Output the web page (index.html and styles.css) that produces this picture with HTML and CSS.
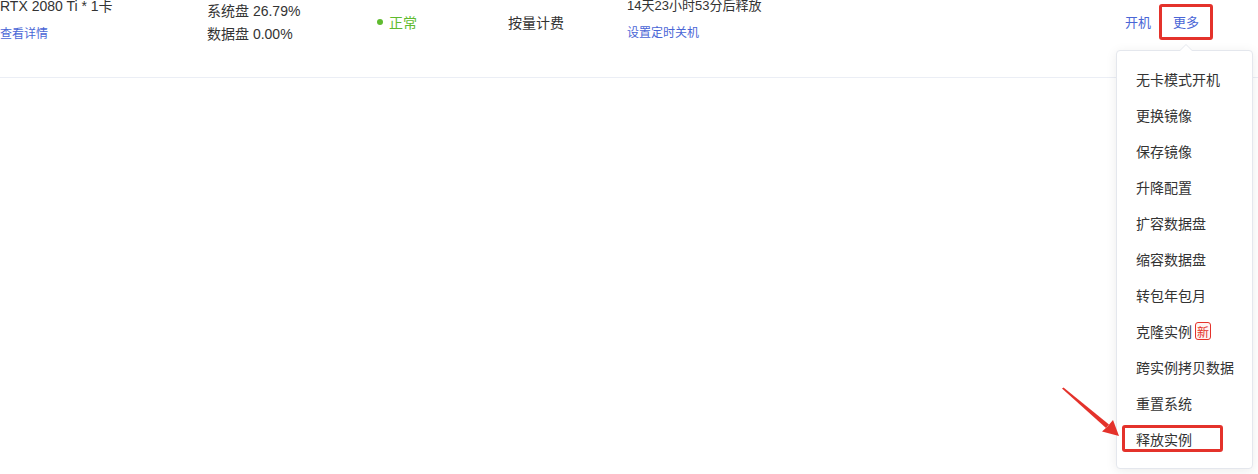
FILE: index.html
```html
<!DOCTYPE html>
<html lang="zh-CN">
<head>
  <meta charset="UTF-8">
  <title>实例列表</title>
  <link rel="stylesheet" href="styles.css">
</head>
<body>
  <div class="page">
    <div class="table">
      <div class="row">
        <div class="cell cell-gpu">
          <div class="line">RTX 2080 Ti * 1卡</div>
          <a class="link link-gpu">查看详情</a>
        </div>
        <div class="cell cell-disk">
          <div class="line">系统盘 26.79%</div>
          <div class="line">数据盘 0.00%</div>
        </div>
        <div class="cell">
          <span class="status"><i class="dot"></i>正常</span>
        </div>
        <div class="cell">按量计费</div>
        <div class="cell cell-release">
          <div class="line">14天23小时53分后释放</div>
          <a class="link link-release">设置定时关机</a>
        </div>
        <div class="cell cell-actions">
          <a class="action">开机</a>
          <a class="action more">更多</a>
        </div>
      </div>
    </div>

    <!-- dropdown opened from 更多 -->
    <div class="dropdown">
      <ul class="menu">
        <li>无卡模式开机</li>
        <li>更换镜像</li>
        <li>保存镜像</li>
        <li>升降配置</li>
        <li>扩容数据盘</li>
        <li>缩容数据盘</li>
        <li>转包年包月</li>
        <li>克隆实例 <span class="badge">新</span></li>
        <li>跨实例拷贝数据</li>
        <li>重置系统</li>
        <li class="marked">释放实例</li>
      </ul>
    </div>

    <svg class="pointer" width="1258" height="474" viewBox="0 0 1258 474">
      <polygon points="1062,388.5 1063.5,387.5 1109,424.5 1106,428" fill="#e4322b"/>
      <polygon points="1119,436 1102,431.5 1107.5,426.5 1113,420 " fill="#e4322b"/>
    </svg>
  </div>
</body>
</html>
```

FILE: styles.css
```css
* {
  margin: 0;
  padding: 0;
  box-sizing: border-box;
}

body {
  font-family: "Liberation Sans", "Noto Sans CJK SC", sans-serif;
  background: #fff;
  color: #333;
  overflow: hidden;
}

.page {
  position: relative;
  width: 1258px;
  height: 474px;
  overflow: hidden;
}

/* Instance table row (scrolled, top part out of view) */
.table {
  margin-top: -34px;
}

.row {
  display: grid;
  grid-template-columns: 207px 170px 131px 119px 1fr auto;
  align-items: center;
  height: 112px;
  border-bottom: 1px solid #ebeef5;
  font-size: 14px;
}

.line {
  line-height: 22px;
}

.link {
  display: block;
  color: #4a66d6;
  font-size: 12px;
  line-height: 20px;
  cursor: pointer;
}

.cell-gpu,
.cell-release {
  align-self: start;
  padding-top: 29px;
}

.link-gpu {
  margin-top: 7px;
}

.link-release {
  margin-top: 6px;
}

.cell-release .line {
  font-size: 13px;
}

.cell-disk {
  padding-top: 2px;
}

.cell-disk .line {
  line-height: 23px;
}

.status {
  display: inline-flex;
  align-items: center;
  gap: 6px;
  color: #5fbb2f;
}

.dot {
  width: 6px;
  height: 6px;
  border-radius: 50%;
  background: #5fbb2f;
}

.cell-actions {
  display: flex;
  align-items: center;
  gap: 8px;
  padding-right: 45px;
}

.action {
  color: #4a66d6;
  font-size: 13px;
  cursor: pointer;
}

.more {
  display: inline-flex;
  align-items: center;
  height: 36px;
  padding: 0 11px 0 11px;
  border: 3px solid #e4322b;
  border-radius: 3px;
}

/* Dropdown menu */
.dropdown {
  position: absolute;
  left: 1116px;
  top: 50px;
  width: 137px;
  background: #fff;
  border: 1px solid #e4e7ed;
  border-radius: 4px;
  box-shadow: 0 2px 12px rgba(0, 0, 0, 0.08);
}

.dropdown::before,
.dropdown::after {
  content: '';
  position: absolute;
  left: 63px;
  border: 6px solid transparent;
  border-top: 0;
}

.dropdown::before {
  top: -7px;
  border-bottom: 6px solid #e4e7ed;
}

.dropdown::after {
  top: -6px;
  border-bottom: 6px solid #fff;
}

.menu {
  list-style: none;
  padding: 10px 0 11px;
}

.menu li {
  position: relative;
  display: flex;
  align-items: center;
  gap: 3px;
  height: 36px;
  padding-left: 19px;
  font-family: "Noto Sans CJK SC", sans-serif;
  font-size: 14px;
  color: #333;
}

.badge {
  display: inline-flex;
  align-items: center;
  justify-content: center;
  width: 16px;
  height: 18px;
  font-size: 12px;
  color: #e4322b;
  background: #fff3f2;
  border: 1px solid #e4322b;
  border-radius: 3px;
}

.menu li.marked::after {
  content: '';
  position: absolute;
  left: 5px;
  right: 29px;
  top: 4px;
  bottom: 5px;
  border: 3px solid #e4322b;
  border-radius: 3px;
}

/* annotation arrow */
.pointer {
  position: absolute;
  left: 0;
  top: 0;
  pointer-events: none;
}
```
